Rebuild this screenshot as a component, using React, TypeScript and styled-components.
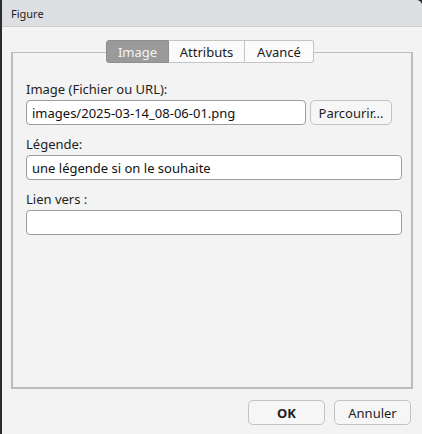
import React from "react";
import styled, { createGlobalStyle } from "styled-components";

const Global = createGlobalStyle`
  html, body { margin: 0; padding: 0; }
  body {
    background: #2a2d2e;
    font-family: "Noto Sans", "DejaVu Sans", sans-serif;
    width: 422px;
    height: 434px;
    overflow: hidden;
  }
`;

const Dialog = styled.div`
  margin-left: 2px;
  width: 420px;
  height: 434px;
  background: #f2f3f2;
  display: flex;
  flex-direction: column;
  border-top-right-radius: 6px;
  overflow: hidden;
`;

const TitleBar = styled.div`
  height: 27px;
  box-sizing: border-box;
  background: #dedfe3;
  border-bottom: 1px solid #cfd0d3;
  display: flex;
  align-items: center;
  padding-left: 9px;
  font-size: 11px;
  color: #1e1e1e;
`;

const Body = styled.div`
  flex: 1;
  display: flex;
  flex-direction: column;
  padding: 13px 9px 0 9px;
`;

const TabWidget = styled.div`
  height: 349px;
  display: flex;
  flex-direction: column;
`;

const TabBar = styled.div`
  display: flex;
  justify-content: center;
  position: relative;
  z-index: 1;
  margin-left: -4px;
`;

const Tab = styled.div<{ $active?: boolean; $w: number }>`
  width: ${(p) => p.$w}px;
  height: 23px;
  box-sizing: border-box;
  display: flex;
  align-items: center;
  justify-content: center;
  font-size: 13px;
  background: ${(p) => (p.$active ? "#9a9a9a" : "#fbfbfb")};
  color: ${(p) => (p.$active ? "#f4f4f4" : "#1a1a1a")};
  border: 1px solid ${(p) => (p.$active ? "#8f8f8f" : "#c4c4c4")};
  border-left-width: ${(p) => (p.$active ? 1 : 0)}px;
  &:first-child { border-radius: 3px 0 0 3px; }
  &:last-child { border-radius: 0 3px 3px 0; }
`;

const Pane = styled.div`
  margin-top: -11px;
  flex: 1;
  border: 2px solid #bdbdbd;
  border-width: 1px 2px 2px 2px;
  padding: 27px 9px 0 13px;
  display: flex;
  flex-direction: column;
`;

const Label = styled.div`
  font-size: 13px;
  color: #1e1e1e;
  height: 18px;
  line-height: 18px;
  margin-bottom: 2px;
`;

const Row = styled.div<{ $inset?: number }>`
  display: flex;
  gap: 4px;
  margin-bottom: 10px;
  margin-right: ${(p) => p.$inset ?? 0}px;
`;

const Input = styled.div`
  flex: 1;
  height: 25px;
  box-sizing: border-box;
  background: #ffffff;
  border: 1px solid #9d9d9d;
  border-radius: 4px;
  font-size: 13px;
  color: #111;
  display: flex;
  align-items: center;
  padding-left: 5px;
`;

const Button = styled.div<{ $w: number; $bold?: boolean }>`
  width: ${(p) => p.$w}px;
  height: 25px;
  box-sizing: border-box;
  border: 1px solid #c2c2c2;
  border-radius: 5px;
  background: #f6f6f6;
  font-size: 13px;
  font-weight: ${(p) => (p.$bold ? 700 : 400)};
  color: #1e1e1e;
  display: flex;
  align-items: center;
  justify-content: center;
  white-space: nowrap;
`;

const Footer = styled.div`
  display: flex;
  justify-content: flex-end;
  gap: 9px;
  padding: 11px 2px 0 0;
`;

export default function App() {
  return (
    <>
      <Global />
      <Dialog>
        <TitleBar>Figure</TitleBar>
        <Body>
          <TabWidget>
            <TabBar>
              <Tab $active $w={63}>Image</Tab>
              <Tab $w={76}>Attributs</Tab>
              <Tab $w={69}>Avancé</Tab>
            </TabBar>
            <Pane>
              <Label>Image (Fichier ou URL):</Label>
              <Row $inset={10}>
                <Input>images/2025-03-14_08-06-01.png</Input>
                <Button $w={82}>Parcourir...</Button>
              </Row>
              <Label>Légende:</Label>
              <Row>
                <Input>une légende si on le souhaite</Input>
              </Row>
              <Label>Lien vers :</Label>
              <Row>
                <Input></Input>
              </Row>
            </Pane>
          </TabWidget>
          <Footer>
            <Button $w={77} $bold>OK</Button>
            <Button $w={77}>Annuler</Button>
          </Footer>
        </Body>
      </Dialog>
    </>
  );
}
